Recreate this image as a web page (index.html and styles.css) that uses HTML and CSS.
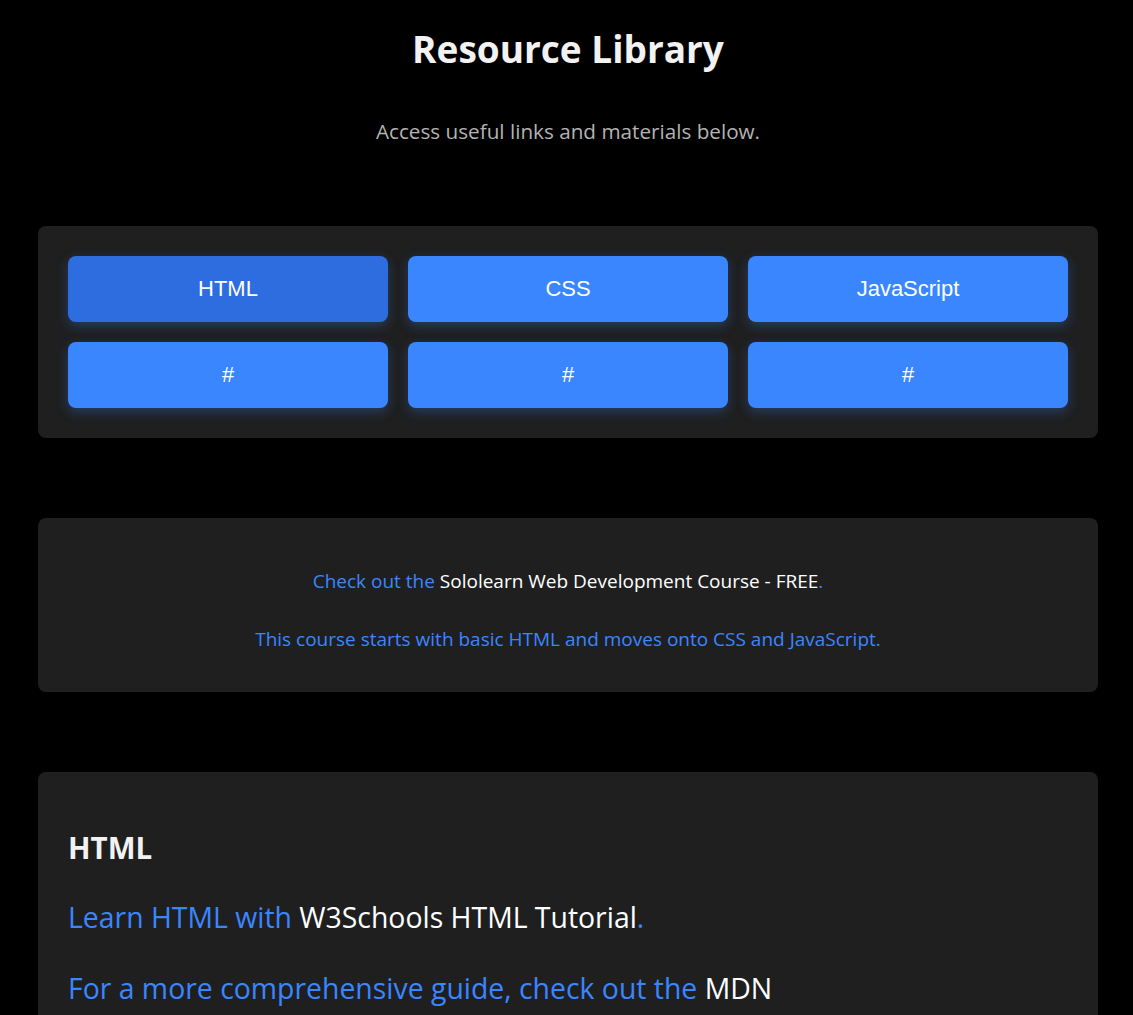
FILE: index.html
```html
<!DOCTYPE html>
<html lang="en">
<head>
<meta charset="utf-8">
<title>Resource Library</title>
<link rel="stylesheet" href="styles.css">
</head>
<body>
<div class="page">
  <header class="header">
    <h1 class="title">Resource Library</h1>
    <p class="subtitle">Access useful links and materials below.</p>
  </header>

  <section class="panel nav-panel">
    <nav class="btn-grid">
      <a class="btn btn-active" href="#html">HTML</a>
      <a class="btn" href="#css">CSS</a>
      <a class="btn" href="#js">JavaScript</a>
      <a class="btn" href="#">#</a>
      <a class="btn" href="#">#</a>
      <a class="btn" href="#">#</a>
    </nav>
  </section>

  <section class="panel course-panel">
    <p class="course-line">Check out the <a class="link" href="#">Sololearn Web Development Course - FREE</a>.</p>
    <p class="course-line course-second">This course starts with basic HTML and moves onto CSS and JavaScript.</p>
  </section>

  <section class="panel topic-panel" id="html">
    <h2 class="topic-title">HTML</h2>
    <p class="topic-text">Learn HTML with <a class="link" href="#">W3Schools HTML Tutorial</a>.</p>
    <p class="topic-text">For a more comprehensive guide, check out the <a class="link" href="#">MDN</a><br><a class="link" href="#">HTML Reference</a>.</p>
  </section>
</div>
</body>
</html>
```
FILE: styles.css
```css
html, body {
  margin: 0;
  padding: 0;
  background: #000;
}

body {
  font-family: "Open Sans", "Noto Sans", sans-serif;
  color: #fff;
}

.page {
  padding: 0 35px 40px 38px;
}

.header {
  text-align: center;
  padding-top: 24px;
}

.title {
  margin: 0;
  font-size: 37px;
  line-height: 50px;
  font-weight: 700;
  color: #f2f2f2;
}

.subtitle {
  margin: 43px 0 0;
  font-size: 20.7px;
  line-height: 28px;
  color: #b3b3b3;
}

.panel {
  background: #1f1f1f;
  border-radius: 8px;
}

.nav-panel {
  margin-top: 81px;
  padding: 30px;
}

.btn-grid {
  display: grid;
  grid-template-columns: repeat(3, 1fr);
  gap: 20px;
}

.btn {
  display: flex;
  align-items: center;
  justify-content: center;
  height: 66px;
  background: #3a86ff;
  color: #fff;
  border-radius: 8px;
  text-decoration: none;
  font-family: "Liberation Sans", Arial, sans-serif;
  font-size: 22px;
  box-shadow: 0 4px 12px rgba(58, 134, 255, 0.3);
}

.btn-active {
  background: #2e6de0;
}

.course-panel {
  margin-top: 80px;
  padding: 50px 30px 40px;
  text-align: center;
}

.course-line {
  margin: 0;
  font-size: 19px;
  line-height: 26px;
  color: #3a86ff;
}

.course-second {
  margin-top: 32px;
}

.link {
  color: #fff;
  text-decoration: none;
}

.topic-panel {
  margin-top: 80px;
  padding: 56px 30px 40px;
}

.topic-title {
  margin: 0;
  font-size: 29.5px;
  line-height: 40px;
  font-weight: 700;
  color: #f2f2f2;
}

.topic-text {
  margin: 30px 0 0;
  font-size: 28.4px;
  line-height: 38px;
  color: #3a86ff;
}

.topic-text + .topic-text {
  margin-top: 33px;
}
```
